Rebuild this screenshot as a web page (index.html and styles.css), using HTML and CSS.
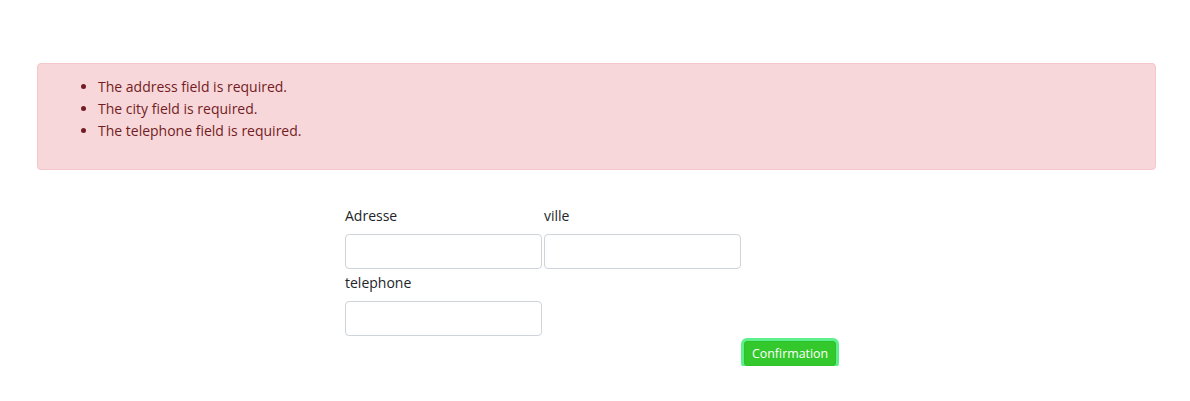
FILE: index.html
```html
<!DOCTYPE html>
<html lang="en">
<head>
<meta charset="utf-8">
<title>Commande</title>
<link rel="stylesheet" href="styles.css">
</head>
<body>
<div class="alert">
  <ul class="errors">
    <li>The address field is required.</li>
    <li>The city field is required.</li>
    <li>The telephone field is required.</li>
  </ul>
</div>
<form class="form">
  <div class="row">
    <div class="field">
      <label class="label" for="adresse">Adresse</label>
      <input class="input" id="adresse" type="text">
    </div>
    <div class="field">
      <label class="label" for="ville">ville</label>
      <input class="input" id="ville" type="text">
    </div>
  </div>
  <div class="row row-second">
    <div class="field">
      <label class="label" for="telephone">telephone</label>
      <input class="input" id="telephone" type="text">
    </div>
  </div>
  <div class="actions">
    <button class="btn" type="button">Confirmation</button>
  </div>
</form>
</body>
</html>
```
FILE: styles.css
```css
html, body {
  margin: 0;
  padding: 0;
  background: #ffffff;
}
body {
  font-family: "Open Sans", "Noto Sans", sans-serif;
  font-size: 14px;
  line-height: 22px;
  color: #212529;
}
.alert {
  margin: 63px 34px 0 37px;
  padding: 12px 20px;
  background: #f8d7da;
  border: 1px solid #f5c6cb;
  border-radius: 4px;
  color: #721c24;
}
.errors {
  margin: 0 0 15px 0;
  padding-left: 40px;
}
.form {
  margin: 35px 0 0 345px;
}
.row {
  display: flex;
  gap: 2px;
}
.row-second {
  margin-top: 3px;
}
.field {
  display: flex;
  flex-direction: column;
  width: 197px;
}
.label {
  line-height: 22px;
  margin-bottom: 7px;
}
.input {
  box-sizing: border-box;
  height: 35px;
  width: 197px;
  margin: 0;
  border: 1px solid #ced4da;
  border-radius: 4px;
  background: #fff;
  font: inherit;
  padding: 6px 12px;
}
.actions {
  display: flex;
  padding-left: 399px;
  margin-top: 5px;
}
.btn {
  font-family: inherit;
  font-size: 12.4px;
  line-height: 19px;
  height: 25px;
  padding: 0 7px;
  border: 1px solid #2fc128;
  border-radius: 3px;
  background: #33c82b;
  color: #ffffff;
  box-shadow: 0 0 0 3px #5ef08c;
}
```
